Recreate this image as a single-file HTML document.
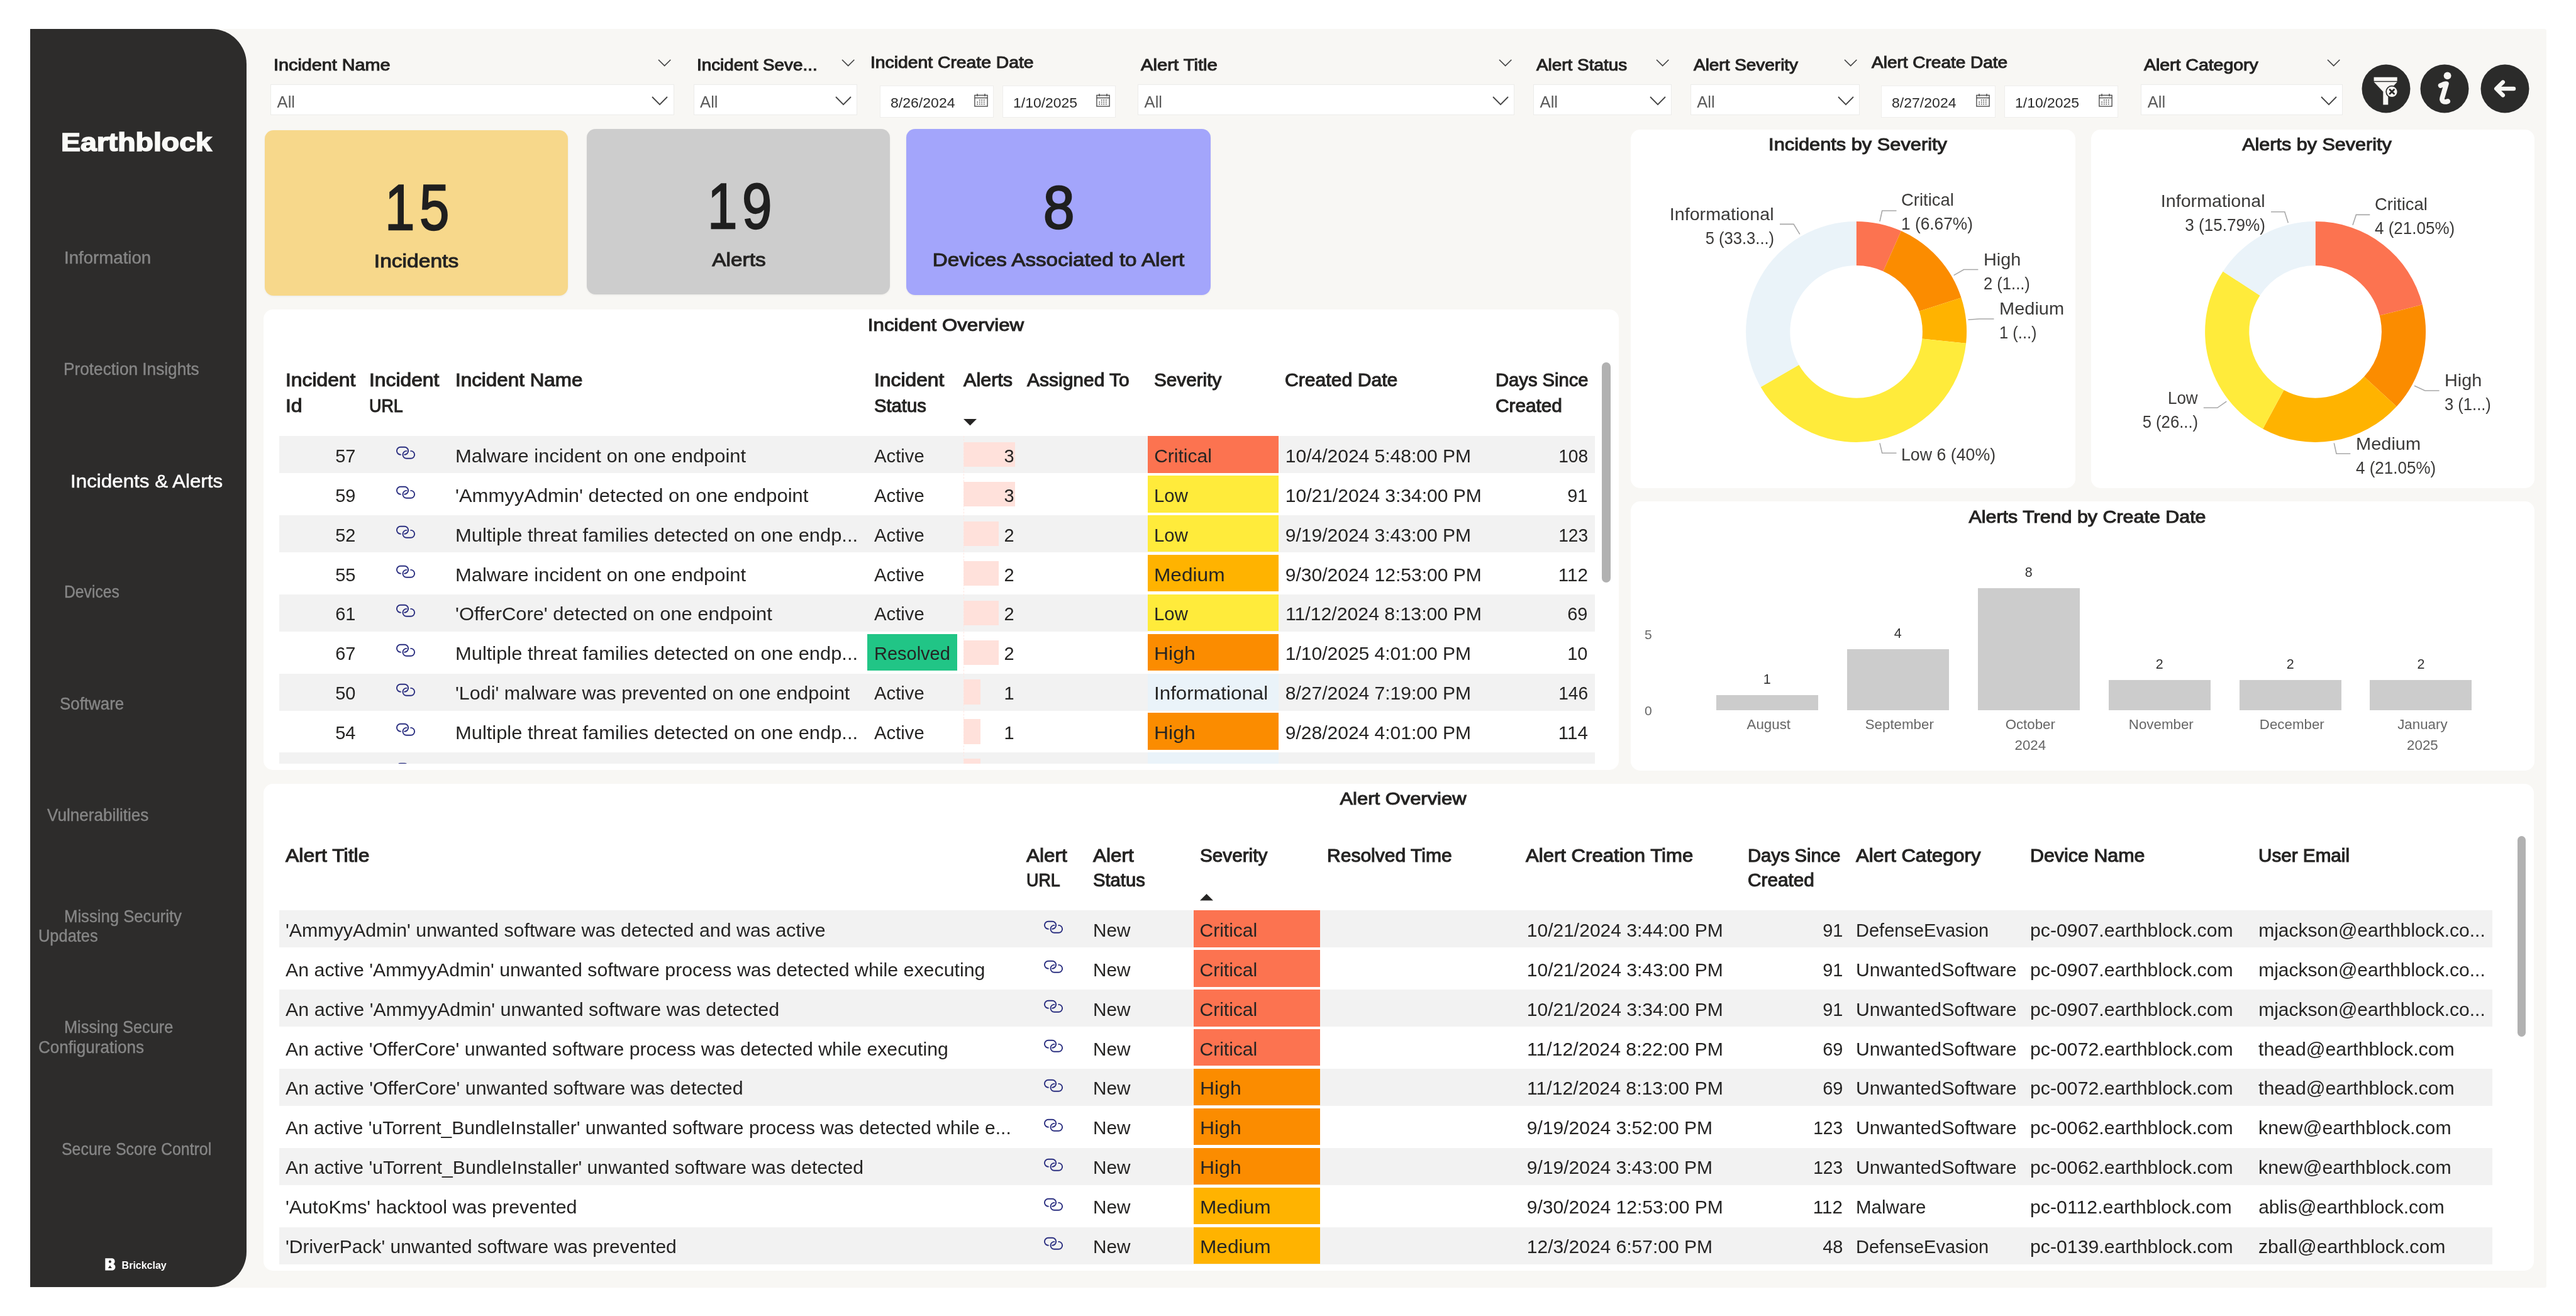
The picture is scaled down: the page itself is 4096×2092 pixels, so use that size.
<!DOCTYPE html><html><head><meta charset="utf-8"><title>Incidents &amp; Alerts</title><style>
html,body{margin:0;padding:0;background:#fff;}
#pg{will-change:transform;position:relative;width:4096px;height:2092px;overflow:hidden;background:#fff;font-family:"Liberation Sans",sans-serif;color:#252423;}
.t{position:absolute;white-space:pre;}
.b{position:absolute;}
.bb{font-weight:bold;}
.h{font-weight:normal;-webkit-text-stroke:1.05px #252423;}
svg{position:absolute;overflow:visible;}
</style></head><body><div id="pg">
<div class="b" style="left:48.0px;top:46.0px;width:4001.2px;height:2001.3px;background:#f8f7f4;border-radius:0 3px 3px 0;"></div>
<div class="b" style="left:48.0px;top:46.0px;width:344.2px;height:1999.5px;background:#2d2c2b;border-radius:0 56px 56px 0;"></div>
<div class="t bb" style="top:206.1px;font-size:40px;line-height:40px;left:97.0px;color:#fafaf7;transform-origin:0 50%;transform:scaleX(1.16);-webkit-text-stroke:1.6px #fafaf7;">Earthblock</div>
<div class="t" style="top:396.5px;font-size:27px;line-height:27px;left:102.2px;color:#868686;transform:scaleX(1.023);transform-origin:0 50%;-webkit-text-stroke:0.4px #868686;">Information</div>
<div class="t" style="top:574.1px;font-size:27px;line-height:27px;left:100.8px;color:#868686;transform:scaleX(0.971);transform-origin:0 50%;-webkit-text-stroke:0.4px #868686;">Protection Insights</div>
<div class="t" style="top:749.6px;font-size:29.6px;line-height:29.6px;left:111.6px;color:#ffffff;transform:scaleX(1.059);transform-origin:0 50%;-webkit-text-stroke:0.5px #fff;">Incidents &amp; Alerts</div>
<div class="t" style="top:927.8px;font-size:27px;line-height:27px;left:102.2px;color:#868686;transform:scaleX(0.916);transform-origin:0 50%;-webkit-text-stroke:0.4px #868686;">Devices</div>
<div class="t" style="top:1105.5px;font-size:27px;line-height:27px;left:95.1px;color:#868686;transform:scaleX(0.959);transform-origin:0 50%;-webkit-text-stroke:0.4px #868686;">Software</div>
<div class="t" style="top:1282.6px;font-size:27px;line-height:27px;left:74.9px;color:#868686;transform:scaleX(0.966);transform-origin:0 50%;-webkit-text-stroke:0.4px #868686;">Vulnerabilities</div>
<div class="t" style="top:1443.7px;font-size:27px;line-height:27px;left:102.2px;color:#868686;transform:scaleX(0.951);transform-origin:0 50%;-webkit-text-stroke:0.4px #868686;">Missing Security</div>
<div class="t" style="top:1475.2px;font-size:27px;line-height:27px;left:61.2px;color:#868686;transform:scaleX(0.942);transform-origin:0 50%;-webkit-text-stroke:0.4px #868686;">Updates</div>
<div class="t" style="top:1620.4px;font-size:27px;line-height:27px;left:102.2px;color:#868686;transform:scaleX(0.939);transform-origin:0 50%;-webkit-text-stroke:0.4px #868686;">Missing Secure</div>
<div class="t" style="top:1651.9px;font-size:27px;line-height:27px;left:61.2px;color:#868686;transform:scaleX(0.965);transform-origin:0 50%;-webkit-text-stroke:0.4px #868686;">Configurations</div>
<div class="t" style="top:1814.3px;font-size:27px;line-height:27px;left:97.5px;color:#868686;transform:scaleX(0.923);transform-origin:0 50%;-webkit-text-stroke:0.4px #868686;">Secure Score Control</div>
<svg style="left:166.5px;top:1999.5px" width="17" height="20" viewBox="0 0 17 20"><path fill="#fff" fill-rule="evenodd" d="M0.3,0.3 H10.5 C14,0.3 15.6,2.6 15.6,5.2 C15.6,7.2 14.7,8.6 13.3,9.4 C15.3,10.2 16.4,11.9 16.4,14 C16.4,17.4 14,19.6 10.5,19.6 H0.3 Z M7.9,3.6 A2.1,2.1 0 1 0 7.9,7.8 A2.1,2.1 0 1 0 7.9,3.6 Z M7.9,11.6 L4.9,16 H10.9 Z"/></svg>
<div class="t bb" style="top:2003.5px;font-size:16px;line-height:16px;left:193.6px;color:#ffffff;">Brickclay</div>
<div class="t h" style="top:89.8px;font-size:26.3px;line-height:26.3px;left:435.0px;transform:scaleX(1.094);transform-origin:0 50%;">Incident Name</div>
<svg style="left:1047.2px;top:94.6px" width="19.3" height="9.6"><polyline points="0,0 9.65,9.6 19.3,0" fill="none" stroke="#444" stroke-width="1.7"/></svg>
<div class="b" style="left:430.0px;top:134.2px;width:641.5px;height:49.2px;background:#fff;box-sizing:border-box;border:1.5px solid #ececea;"></div>
<div class="t" style="top:149.9px;font-size:25.6px;line-height:25.6px;left:440.6px;color:#5a5a5a;">All</div>
<svg style="left:1037.1px;top:154.3px" width="24" height="12.2"><polyline points="0,0 12.0,12.2 24,0" fill="none" stroke="#444" stroke-width="1.8"/></svg>
<div class="t h" style="top:89.8px;font-size:26.3px;line-height:26.3px;left:1107.5px;transform:scaleX(1.057);transform-origin:0 50%;">Incident Seve...</div>
<svg style="left:1338.7px;top:94.6px" width="19.3" height="9.6"><polyline points="0,0 9.65,9.6 19.3,0" fill="none" stroke="#444" stroke-width="1.7"/></svg>
<div class="b" style="left:1102.5px;top:134.2px;width:260.5px;height:49.2px;background:#fff;box-sizing:border-box;border:1.5px solid #ececea;"></div>
<div class="t" style="top:149.9px;font-size:25.6px;line-height:25.6px;left:1113.1px;color:#5a5a5a;">All</div>
<svg style="left:1328.6px;top:154.3px" width="24" height="12.2"><polyline points="0,0 12.0,12.2 24,0" fill="none" stroke="#444" stroke-width="1.8"/></svg>
<div class="t h" style="top:85.7px;font-size:26.3px;line-height:26.3px;left:1383.8px;transform:scaleX(1.076);transform-origin:0 50%;">Incident Create Date</div>
<div class="b" style="left:1399.4px;top:136.3px;width:180.9px;height:50.7px;background:#fff;box-sizing:border-box;border:1.5px solid #efeeec;"></div>
<div class="t" style="top:152.7px;font-size:22px;line-height:22px;left:1416.3px;color:#2a2a2a;transform:scaleX(1.048);transform-origin:0 50%;">8/26/2024</div>
<svg style="left:1548.8px;top:149.4px" width="22" height="21" viewBox="0 0 22 21"><g fill="none" stroke="#484848" stroke-width="1.35"><rect x="0.9" y="2.4" width="20.2" height="17.6"/><line x1="0.9" y1="6.6" x2="21.1" y2="6.6"/><line x1="5" y1="0" x2="5" y2="4.2"/><line x1="17" y1="0" x2="17" y2="4.2"/></g><g fill="#484848"><rect x="7.9" y="9.3" width="1.6" height="1.6"/><rect x="11.4" y="9.3" width="1.6" height="1.6"/><rect x="14.9" y="9.3" width="1.6" height="1.6"/><rect x="4.4" y="12.5" width="1.6" height="1.6"/><rect x="7.9" y="12.5" width="1.6" height="1.6"/><rect x="11.4" y="12.5" width="1.6" height="1.6"/><rect x="14.9" y="12.5" width="1.6" height="1.6"/><rect x="4.4" y="15.7" width="1.6" height="1.6"/><rect x="7.9" y="15.7" width="1.6" height="1.6"/><rect x="11.4" y="15.7" width="1.6" height="1.6"/><rect x="14.9" y="15.7" width="1.6" height="1.6"/></g></svg>
<div class="b" style="left:1594.2px;top:136.3px;width:180.1px;height:50.7px;background:#fff;box-sizing:border-box;border:1.5px solid #efeeec;"></div>
<div class="t" style="top:152.7px;font-size:22px;line-height:22px;left:1611.1px;color:#2a2a2a;transform:scaleX(1.043);transform-origin:0 50%;">1/10/2025</div>
<svg style="left:1742.8px;top:149.4px" width="22" height="21" viewBox="0 0 22 21"><g fill="none" stroke="#484848" stroke-width="1.35"><rect x="0.9" y="2.4" width="20.2" height="17.6"/><line x1="0.9" y1="6.6" x2="21.1" y2="6.6"/><line x1="5" y1="0" x2="5" y2="4.2"/><line x1="17" y1="0" x2="17" y2="4.2"/></g><g fill="#484848"><rect x="7.9" y="9.3" width="1.6" height="1.6"/><rect x="11.4" y="9.3" width="1.6" height="1.6"/><rect x="14.9" y="9.3" width="1.6" height="1.6"/><rect x="4.4" y="12.5" width="1.6" height="1.6"/><rect x="7.9" y="12.5" width="1.6" height="1.6"/><rect x="11.4" y="12.5" width="1.6" height="1.6"/><rect x="14.9" y="12.5" width="1.6" height="1.6"/><rect x="4.4" y="15.7" width="1.6" height="1.6"/><rect x="7.9" y="15.7" width="1.6" height="1.6"/><rect x="11.4" y="15.7" width="1.6" height="1.6"/><rect x="14.9" y="15.7" width="1.6" height="1.6"/></g></svg>
<div class="t h" style="top:89.8px;font-size:26.3px;line-height:26.3px;left:1814.0px;transform:scaleX(1.111);transform-origin:0 50%;">Alert Title</div>
<svg style="left:2384.1px;top:94.6px" width="19.3" height="9.6"><polyline points="0,0 9.65,9.6 19.3,0" fill="none" stroke="#444" stroke-width="1.7"/></svg>
<div class="b" style="left:1809.0px;top:134.2px;width:599.4px;height:49.2px;background:#fff;box-sizing:border-box;border:1.5px solid #ececea;"></div>
<div class="t" style="top:149.9px;font-size:25.6px;line-height:25.6px;left:1819.6px;color:#5a5a5a;">All</div>
<svg style="left:2374.0px;top:154.3px" width="24" height="12.2"><polyline points="0,0 12.0,12.2 24,0" fill="none" stroke="#444" stroke-width="1.8"/></svg>
<div class="t h" style="top:89.8px;font-size:26.3px;line-height:26.3px;left:2443.0px;transform:scaleX(1.060);transform-origin:0 50%;">Alert Status</div>
<svg style="left:2633.9px;top:94.6px" width="19.3" height="9.6"><polyline points="0,0 9.65,9.6 19.3,0" fill="none" stroke="#444" stroke-width="1.7"/></svg>
<div class="b" style="left:2438.0px;top:134.2px;width:220.2px;height:49.2px;background:#fff;box-sizing:border-box;border:1.5px solid #ececea;"></div>
<div class="t" style="top:149.9px;font-size:25.6px;line-height:25.6px;left:2448.6px;color:#5a5a5a;">All</div>
<svg style="left:2623.8px;top:154.3px" width="24" height="12.2"><polyline points="0,0 12.0,12.2 24,0" fill="none" stroke="#444" stroke-width="1.8"/></svg>
<div class="t h" style="top:89.8px;font-size:26.3px;line-height:26.3px;left:2692.6px;transform:scaleX(1.062);transform-origin:0 50%;">Alert Severity</div>
<svg style="left:2933.2px;top:94.6px" width="19.3" height="9.6"><polyline points="0,0 9.65,9.6 19.3,0" fill="none" stroke="#444" stroke-width="1.7"/></svg>
<div class="b" style="left:2687.6px;top:134.2px;width:269.9px;height:49.2px;background:#fff;box-sizing:border-box;border:1.5px solid #ececea;"></div>
<div class="t" style="top:149.9px;font-size:25.6px;line-height:25.6px;left:2698.2px;color:#5a5a5a;">All</div>
<svg style="left:2923.1px;top:154.3px" width="24" height="12.2"><polyline points="0,0 12.0,12.2 24,0" fill="none" stroke="#444" stroke-width="1.8"/></svg>
<div class="t h" style="top:85.7px;font-size:26.3px;line-height:26.3px;left:2975.8px;transform:scaleX(1.064);transform-origin:0 50%;">Alert Create Date</div>
<div class="b" style="left:2991.4px;top:136.3px;width:181.9px;height:50.7px;background:#fff;box-sizing:border-box;border:1.5px solid #efeeec;"></div>
<div class="t" style="top:152.7px;font-size:22px;line-height:22px;left:3008.3px;color:#2a2a2a;transform:scaleX(1.048);transform-origin:0 50%;">8/27/2024</div>
<svg style="left:3141.8px;top:149.4px" width="22" height="21" viewBox="0 0 22 21"><g fill="none" stroke="#484848" stroke-width="1.35"><rect x="0.9" y="2.4" width="20.2" height="17.6"/><line x1="0.9" y1="6.6" x2="21.1" y2="6.6"/><line x1="5" y1="0" x2="5" y2="4.2"/><line x1="17" y1="0" x2="17" y2="4.2"/></g><g fill="#484848"><rect x="7.9" y="9.3" width="1.6" height="1.6"/><rect x="11.4" y="9.3" width="1.6" height="1.6"/><rect x="14.9" y="9.3" width="1.6" height="1.6"/><rect x="4.4" y="12.5" width="1.6" height="1.6"/><rect x="7.9" y="12.5" width="1.6" height="1.6"/><rect x="11.4" y="12.5" width="1.6" height="1.6"/><rect x="14.9" y="12.5" width="1.6" height="1.6"/><rect x="4.4" y="15.7" width="1.6" height="1.6"/><rect x="7.9" y="15.7" width="1.6" height="1.6"/><rect x="11.4" y="15.7" width="1.6" height="1.6"/><rect x="14.9" y="15.7" width="1.6" height="1.6"/></g></svg>
<div class="b" style="left:3186.9px;top:136.3px;width:181.1px;height:50.7px;background:#fff;box-sizing:border-box;border:1.5px solid #efeeec;"></div>
<div class="t" style="top:152.7px;font-size:22px;line-height:22px;left:3203.8px;color:#2a2a2a;transform:scaleX(1.043);transform-origin:0 50%;">1/10/2025</div>
<svg style="left:3336.5px;top:149.4px" width="22" height="21" viewBox="0 0 22 21"><g fill="none" stroke="#484848" stroke-width="1.35"><rect x="0.9" y="2.4" width="20.2" height="17.6"/><line x1="0.9" y1="6.6" x2="21.1" y2="6.6"/><line x1="5" y1="0" x2="5" y2="4.2"/><line x1="17" y1="0" x2="17" y2="4.2"/></g><g fill="#484848"><rect x="7.9" y="9.3" width="1.6" height="1.6"/><rect x="11.4" y="9.3" width="1.6" height="1.6"/><rect x="14.9" y="9.3" width="1.6" height="1.6"/><rect x="4.4" y="12.5" width="1.6" height="1.6"/><rect x="7.9" y="12.5" width="1.6" height="1.6"/><rect x="11.4" y="12.5" width="1.6" height="1.6"/><rect x="14.9" y="12.5" width="1.6" height="1.6"/><rect x="4.4" y="15.7" width="1.6" height="1.6"/><rect x="7.9" y="15.7" width="1.6" height="1.6"/><rect x="11.4" y="15.7" width="1.6" height="1.6"/><rect x="14.9" y="15.7" width="1.6" height="1.6"/></g></svg>
<div class="t h" style="top:89.8px;font-size:26.3px;line-height:26.3px;left:3409.2px;transform:scaleX(1.081);transform-origin:0 50%;">Alert Category</div>
<svg style="left:3700.9px;top:94.6px" width="19.3" height="9.6"><polyline points="0,0 9.65,9.6 19.3,0" fill="none" stroke="#444" stroke-width="1.7"/></svg>
<div class="b" style="left:3404.2px;top:134.2px;width:321.0px;height:49.2px;background:#fff;box-sizing:border-box;border:1.5px solid #ececea;"></div>
<div class="t" style="top:149.9px;font-size:25.6px;line-height:25.6px;left:3414.8px;color:#5a5a5a;">All</div>
<svg style="left:3690.8px;top:154.3px" width="24" height="12.2"><polyline points="0,0 12.0,12.2 24,0" fill="none" stroke="#444" stroke-width="1.8"/></svg>
<svg style="left:3754.6px;top:102.3px" width="78" height="78" viewBox="-39 -39 78 78"><circle r="38.5" fill="#2b2b2a"/><rect x="-19.4" y="-18.3" width="37.1" height="6.1" fill="#f8f7f4"/><path d="M-19.4,-10.8 H17.7 L3.3,4.7 V25.6 H-4.7 V4.7 Z" fill="#f8f7f4"/><circle cx="9.3" cy="4.8" r="10" fill="#2b2b2a"/><circle cx="9.3" cy="4.8" r="8.3" fill="#f8f7f4"/><path d="M6,1.5 L12.6,8.1 M12.6,1.5 L6,8.1" stroke="#2b2b2a" stroke-width="2.8" stroke-linecap="round"/></svg>
<svg style="left:3847.5px;top:102.3px" width="78" height="78" viewBox="-39 -39 78 78"><circle r="38.5" fill="#2b2b2a"/><circle cx="4.6" cy="-20.7" r="5.9" fill="#f8f7f4"/><path d="M-6.3,-5 C-2.5,-7 1,-8.5 2.9,-7.8 L-3.7,14.5 C-5,20 -1,22.4 5.2,20" fill="none" stroke="#f8f7f4" stroke-width="7.8" stroke-linecap="round" stroke-linejoin="round"/></svg>
<svg style="left:3943.5px;top:102.3px" width="78" height="78" viewBox="-39 -39 78 78"><circle r="38.5" fill="#2b2b2a"/><path d="M14,0 H-13.4 M-3.2,-10.4 L-13.8,0 L-3.2,10.4" fill="none" stroke="#f8f7f4" stroke-width="6.4" stroke-linecap="round" stroke-linejoin="round"/></svg>
<div class="b" style="left:420.7px;top:206.7px;width:482.1px;height:263.5px;background:#f7d88b;border-radius:14px;box-shadow:0 1px 3px rgba(0,0,0,0.06);"></div>
<div class="t" style="top:279.5px;font-size:101.5px;line-height:101.5px;left:-333.2px;width:2000px;text-align:center;color:#1f1f1f;transform:scaleX(0.84);letter-spacing:9px;-webkit-text-stroke:2.4px #1f1f1f;">15</div>
<div class="t h" style="top:400.4px;font-size:30.3px;line-height:30.3px;left:-338.2px;width:2000px;text-align:center;transform:scaleX(1.108);transform-origin:50% 50%;">Incidents</div>
<div class="b" style="left:933.4px;top:205.0px;width:482.1px;height:263.2px;background:#cdcdcd;border-radius:14px;box-shadow:0 1px 3px rgba(0,0,0,0.06);"></div>
<div class="t" style="top:278.3px;font-size:101.5px;line-height:101.5px;left:179.5px;width:2000px;text-align:center;color:#1f1f1f;transform:scaleX(0.84);letter-spacing:9px;-webkit-text-stroke:2.4px #1f1f1f;">19</div>
<div class="t h" style="top:398.4px;font-size:30.3px;line-height:30.3px;left:174.5px;width:2000px;text-align:center;transform:scaleX(1.102);transform-origin:50% 50%;">Alerts</div>
<div class="b" style="left:1440.5px;top:205.4px;width:484.5px;height:264.1px;background:#a3a5fb;border-radius:14px;box-shadow:0 1px 3px rgba(0,0,0,0.06);"></div>
<div class="t" style="top:281.7px;font-size:96.5px;line-height:96.5px;left:687.8px;width:2000px;text-align:center;color:#1f1f1f;transform:scaleX(0.93);letter-spacing:9px;-webkit-text-stroke:2.4px #1f1f1f;">8</div>
<div class="t h" style="top:398.2px;font-size:30.3px;line-height:30.3px;left:682.8px;width:2000px;text-align:center;transform:scaleX(1.096);transform-origin:50% 50%;">Devices Associated to Alert</div>
<div class="b" style="left:418.6px;top:492.3px;width:2155.1px;height:732.1px;background:#fff;border-radius:15px;"></div>
<div class="t h" style="top:501.5px;font-size:28.3px;line-height:28.3px;left:503.5px;width:2000px;text-align:center;transform:scaleX(1.104);transform-origin:50% 50%;">Incident Overview</div>
<div class="t h" style="top:590.4px;font-size:28.8px;line-height:28.8px;left:454.0px;transform:scaleX(1.104);transform-origin:0 50%;">Incident</div>
<div class="t h" style="top:630.6px;font-size:28.8px;line-height:28.8px;left:454.0px;transform:scaleX(1.107);transform-origin:0 50%;">Id</div>
<div class="t h" style="top:590.4px;font-size:28.8px;line-height:28.8px;left:587.0px;transform:scaleX(1.104);transform-origin:0 50%;">Incident</div>
<div class="t h" style="top:630.6px;font-size:28.8px;line-height:28.8px;left:587.0px;transform:scaleX(0.934);transform-origin:0 50%;">URL</div>
<div class="t h" style="top:590.4px;font-size:28.8px;line-height:28.8px;left:723.7px;transform:scaleX(1.090);transform-origin:0 50%;">Incident Name</div>
<div class="t h" style="top:590.4px;font-size:28.8px;line-height:28.8px;left:1390.3px;transform:scaleX(1.104);transform-origin:0 50%;">Incident</div>
<div class="t h" style="top:630.6px;font-size:28.8px;line-height:28.8px;left:1390.3px;transform:scaleX(1.014);transform-origin:0 50%;">Status</div>
<div class="t h" style="top:590.4px;font-size:28.8px;line-height:28.8px;left:1532.4px;transform:scaleX(1.061);transform-origin:0 50%;">Alerts</div>
<div class="t h" style="top:590.4px;font-size:28.8px;line-height:28.8px;left:1632.9px;transform:scaleX(1.041);transform-origin:0 50%;">Assigned To</div>
<div class="t h" style="top:590.4px;font-size:28.8px;line-height:28.8px;left:1835.2px;transform:scaleX(1.031);transform-origin:0 50%;">Severity</div>
<div class="t h" style="top:590.4px;font-size:28.8px;line-height:28.8px;left:2042.9px;transform:scaleX(1.047);transform-origin:0 50%;">Created Date</div>
<div class="t h" style="top:590.4px;font-size:28.8px;line-height:28.8px;left:2377.7px;transform:scaleX(1.013);transform-origin:0 50%;">Days Since</div>
<div class="t h" style="top:630.6px;font-size:28.8px;line-height:28.8px;left:2377.7px;transform:scaleX(1.033);transform-origin:0 50%;">Created</div>
<svg style="left:1532.4px;top:666px" width="21" height="11"><polygon points="0,0 21,0 10.5,10.5" fill="#252423"/></svg>
<div class="b" style="left:0;top:0;width:4096px;height:1214.4px;overflow:hidden;">
<div class="b" style="left:444.0px;top:693.1px;width:2092.3px;height:59.4px;background:#f2f2f2;"></div>
<div class="b" style="left:1532.4px;top:703.0px;width:81.8px;height:39.4px;background:#ffe1db;"></div>
<div class="b" style="left:1825.0px;top:693.1px;width:207.7px;height:58.6px;background:#fc7350;"></div>
<svg style="left:629.0px;top:708.8px" width="32" height="22" viewBox="0 0 32 22"><g fill="none" stroke="#2b2f80" stroke-width="1.9" stroke-linecap="round"><path d="M7.9,13.7 A5.95,5.95 0 0 1 7.9,1.8 L14.2,1.8 A5.95,5.95 0 0 1 14.2,13.7"/><path d="M17.4,7.9 A5.95,5.95 0 0 0 17.4,19.8 L24.2,19.8 A5.95,5.95 0 0 0 24.2,7.9"/></g></svg>
<div class="t" style="top:709.8px;font-size:30px;line-height:30px;right:3530.3px;transform:scaleX(0.965);transform-origin:100% 50%;">57</div>
<div class="t" style="top:709.8px;font-size:30px;line-height:30px;left:723.7px;transform:scaleX(1.030);transform-origin:0 50%;">Malware incident on one endpoint</div>
<div class="t" style="top:709.8px;font-size:30px;line-height:30px;left:1390.3px;transform:scaleX(0.976);transform-origin:0 50%;">Active</div>
<div class="t" style="top:709.8px;font-size:30px;line-height:30px;right:2483.5px;transform:scaleX(0.965);transform-origin:100% 50%;">3</div>
<div class="t" style="top:709.8px;font-size:30px;line-height:30px;left:1835.2px;">Critical</div>
<div class="t" style="top:709.8px;font-size:30px;line-height:30px;left:2043.8px;">10/4/2024 5:48:00 PM</div>
<div class="t" style="top:709.8px;font-size:30px;line-height:30px;right:1571.3px;transform:scaleX(0.937);transform-origin:100% 50%;">108</div>
<div class="b" style="left:1532.4px;top:765.9px;width:81.8px;height:39.4px;background:#ffe1db;"></div>
<div class="b" style="left:1825.0px;top:756.0px;width:207.7px;height:58.6px;background:#ffeb3b;"></div>
<svg style="left:629.0px;top:771.7px" width="32" height="22" viewBox="0 0 32 22"><g fill="none" stroke="#2b2f80" stroke-width="1.9" stroke-linecap="round"><path d="M7.9,13.7 A5.95,5.95 0 0 1 7.9,1.8 L14.2,1.8 A5.95,5.95 0 0 1 14.2,13.7"/><path d="M17.4,7.9 A5.95,5.95 0 0 0 17.4,19.8 L24.2,19.8 A5.95,5.95 0 0 0 24.2,7.9"/></g></svg>
<div class="t" style="top:772.7px;font-size:30px;line-height:30px;right:3530.3px;transform:scaleX(0.965);transform-origin:100% 50%;">59</div>
<div class="t" style="top:772.7px;font-size:30px;line-height:30px;left:723.7px;transform:scaleX(1.033);transform-origin:0 50%;">'AmmyyAdmin' detected on one endpoint</div>
<div class="t" style="top:772.7px;font-size:30px;line-height:30px;left:1390.3px;transform:scaleX(0.976);transform-origin:0 50%;">Active</div>
<div class="t" style="top:772.7px;font-size:30px;line-height:30px;right:2483.5px;transform:scaleX(0.965);transform-origin:100% 50%;">3</div>
<div class="t" style="top:772.7px;font-size:30px;line-height:30px;left:1835.2px;transform:scaleX(0.978);transform-origin:0 50%;">Low</div>
<div class="t" style="top:772.7px;font-size:30px;line-height:30px;left:2043.8px;">10/21/2024 3:34:00 PM</div>
<div class="t" style="top:772.7px;font-size:30px;line-height:30px;right:1571.3px;transform:scaleX(0.965);transform-origin:100% 50%;">91</div>
<div class="b" style="left:444.0px;top:818.9px;width:2092.3px;height:59.4px;background:#f2f2f2;"></div>
<div class="b" style="left:1532.4px;top:828.8px;width:56.1px;height:39.4px;background:#ffe1db;"></div>
<div class="b" style="left:1825.0px;top:818.9px;width:207.7px;height:58.6px;background:#ffeb3b;"></div>
<svg style="left:629.0px;top:834.6px" width="32" height="22" viewBox="0 0 32 22"><g fill="none" stroke="#2b2f80" stroke-width="1.9" stroke-linecap="round"><path d="M7.9,13.7 A5.95,5.95 0 0 1 7.9,1.8 L14.2,1.8 A5.95,5.95 0 0 1 14.2,13.7"/><path d="M17.4,7.9 A5.95,5.95 0 0 0 17.4,19.8 L24.2,19.8 A5.95,5.95 0 0 0 24.2,7.9"/></g></svg>
<div class="t" style="top:835.6px;font-size:30px;line-height:30px;right:3530.3px;transform:scaleX(0.965);transform-origin:100% 50%;">52</div>
<div class="t" style="top:835.6px;font-size:30px;line-height:30px;left:723.7px;transform:scaleX(1.029);transform-origin:0 50%;">Multiple threat families detected on one endp...</div>
<div class="t" style="top:835.6px;font-size:30px;line-height:30px;left:1390.3px;transform:scaleX(0.976);transform-origin:0 50%;">Active</div>
<div class="t" style="top:835.6px;font-size:30px;line-height:30px;right:2483.5px;transform:scaleX(0.965);transform-origin:100% 50%;">2</div>
<div class="t" style="top:835.6px;font-size:30px;line-height:30px;left:1835.2px;transform:scaleX(0.978);transform-origin:0 50%;">Low</div>
<div class="t" style="top:835.6px;font-size:30px;line-height:30px;left:2043.8px;">9/19/2024 3:43:00 PM</div>
<div class="t" style="top:835.6px;font-size:30px;line-height:30px;right:1571.3px;transform:scaleX(0.937);transform-origin:100% 50%;">123</div>
<div class="b" style="left:1532.4px;top:891.7px;width:56.1px;height:39.4px;background:#ffe1db;"></div>
<div class="b" style="left:1825.0px;top:881.8px;width:207.7px;height:58.6px;background:#ffb300;"></div>
<svg style="left:629.0px;top:897.5px" width="32" height="22" viewBox="0 0 32 22"><g fill="none" stroke="#2b2f80" stroke-width="1.9" stroke-linecap="round"><path d="M7.9,13.7 A5.95,5.95 0 0 1 7.9,1.8 L14.2,1.8 A5.95,5.95 0 0 1 14.2,13.7"/><path d="M17.4,7.9 A5.95,5.95 0 0 0 17.4,19.8 L24.2,19.8 A5.95,5.95 0 0 0 24.2,7.9"/></g></svg>
<div class="t" style="top:898.5px;font-size:30px;line-height:30px;right:3530.3px;transform:scaleX(0.965);transform-origin:100% 50%;">55</div>
<div class="t" style="top:898.5px;font-size:30px;line-height:30px;left:723.7px;transform:scaleX(1.030);transform-origin:0 50%;">Malware incident on one endpoint</div>
<div class="t" style="top:898.5px;font-size:30px;line-height:30px;left:1390.3px;transform:scaleX(0.976);transform-origin:0 50%;">Active</div>
<div class="t" style="top:898.5px;font-size:30px;line-height:30px;right:2483.5px;transform:scaleX(0.965);transform-origin:100% 50%;">2</div>
<div class="t" style="top:898.5px;font-size:30px;line-height:30px;left:1835.2px;transform:scaleX(1.055);transform-origin:0 50%;">Medium</div>
<div class="t" style="top:898.5px;font-size:30px;line-height:30px;left:2043.8px;">9/30/2024 12:53:00 PM</div>
<div class="t" style="top:898.5px;font-size:30px;line-height:30px;right:1571.3px;transform:scaleX(0.984);transform-origin:100% 50%;">112</div>
<div class="b" style="left:444.0px;top:944.7px;width:2092.3px;height:59.4px;background:#f2f2f2;"></div>
<div class="b" style="left:1532.4px;top:954.6px;width:56.1px;height:39.4px;background:#ffe1db;"></div>
<div class="b" style="left:1825.0px;top:944.7px;width:207.7px;height:58.6px;background:#ffeb3b;"></div>
<svg style="left:629.0px;top:960.4px" width="32" height="22" viewBox="0 0 32 22"><g fill="none" stroke="#2b2f80" stroke-width="1.9" stroke-linecap="round"><path d="M7.9,13.7 A5.95,5.95 0 0 1 7.9,1.8 L14.2,1.8 A5.95,5.95 0 0 1 14.2,13.7"/><path d="M17.4,7.9 A5.95,5.95 0 0 0 17.4,19.8 L24.2,19.8 A5.95,5.95 0 0 0 24.2,7.9"/></g></svg>
<div class="t" style="top:961.4px;font-size:30px;line-height:30px;right:3530.3px;transform:scaleX(0.965);transform-origin:100% 50%;">61</div>
<div class="t" style="top:961.4px;font-size:30px;line-height:30px;left:723.7px;transform:scaleX(1.029);transform-origin:0 50%;">'OfferCore' detected on one endpoint</div>
<div class="t" style="top:961.4px;font-size:30px;line-height:30px;left:1390.3px;transform:scaleX(0.976);transform-origin:0 50%;">Active</div>
<div class="t" style="top:961.4px;font-size:30px;line-height:30px;right:2483.5px;transform:scaleX(0.965);transform-origin:100% 50%;">2</div>
<div class="t" style="top:961.4px;font-size:30px;line-height:30px;left:1835.2px;transform:scaleX(0.978);transform-origin:0 50%;">Low</div>
<div class="t" style="top:961.4px;font-size:30px;line-height:30px;left:2043.8px;transform:scaleX(1.007);transform-origin:0 50%;">11/12/2024 8:13:00 PM</div>
<div class="t" style="top:961.4px;font-size:30px;line-height:30px;right:1571.3px;transform:scaleX(0.965);transform-origin:100% 50%;">69</div>
<div class="b" style="left:1379.0px;top:1007.6px;width:142.8px;height:58.9px;background:#21c586;"></div>
<div class="b" style="left:1532.4px;top:1017.5px;width:56.1px;height:39.4px;background:#ffe1db;"></div>
<div class="b" style="left:1825.0px;top:1007.6px;width:207.7px;height:58.6px;background:#fb8c00;"></div>
<svg style="left:629.0px;top:1023.3px" width="32" height="22" viewBox="0 0 32 22"><g fill="none" stroke="#2b2f80" stroke-width="1.9" stroke-linecap="round"><path d="M7.9,13.7 A5.95,5.95 0 0 1 7.9,1.8 L14.2,1.8 A5.95,5.95 0 0 1 14.2,13.7"/><path d="M17.4,7.9 A5.95,5.95 0 0 0 17.4,19.8 L24.2,19.8 A5.95,5.95 0 0 0 24.2,7.9"/></g></svg>
<div class="t" style="top:1024.3px;font-size:30px;line-height:30px;right:3530.3px;transform:scaleX(0.965);transform-origin:100% 50%;">67</div>
<div class="t" style="top:1024.3px;font-size:30px;line-height:30px;left:723.7px;transform:scaleX(1.029);transform-origin:0 50%;">Multiple threat families detected on one endp...</div>
<div class="t" style="top:1024.3px;font-size:30px;line-height:30px;left:1390.3px;transform:scaleX(0.966);transform-origin:0 50%;">Resolved</div>
<div class="t" style="top:1024.3px;font-size:30px;line-height:30px;right:2483.5px;transform:scaleX(0.965);transform-origin:100% 50%;">2</div>
<div class="t" style="top:1024.3px;font-size:30px;line-height:30px;left:1835.2px;transform:scaleX(1.065);transform-origin:0 50%;">High</div>
<div class="t" style="top:1024.3px;font-size:30px;line-height:30px;left:2043.8px;">1/10/2025 4:01:00 PM</div>
<div class="t" style="top:1024.3px;font-size:30px;line-height:30px;right:1571.3px;transform:scaleX(0.965);transform-origin:100% 50%;">10</div>
<div class="b" style="left:444.0px;top:1070.5px;width:2092.3px;height:59.4px;background:#f2f2f2;"></div>
<div class="b" style="left:1532.4px;top:1080.4px;width:27.0px;height:39.4px;background:#ffe1db;"></div>
<div class="b" style="left:1825.0px;top:1070.5px;width:207.7px;height:58.6px;background:#eaf3f9;"></div>
<svg style="left:629.0px;top:1086.2px" width="32" height="22" viewBox="0 0 32 22"><g fill="none" stroke="#2b2f80" stroke-width="1.9" stroke-linecap="round"><path d="M7.9,13.7 A5.95,5.95 0 0 1 7.9,1.8 L14.2,1.8 A5.95,5.95 0 0 1 14.2,13.7"/><path d="M17.4,7.9 A5.95,5.95 0 0 0 17.4,19.8 L24.2,19.8 A5.95,5.95 0 0 0 24.2,7.9"/></g></svg>
<div class="t" style="top:1087.2px;font-size:30px;line-height:30px;right:3530.3px;transform:scaleX(0.965);transform-origin:100% 50%;">50</div>
<div class="t" style="top:1087.2px;font-size:30px;line-height:30px;left:723.7px;transform:scaleX(1.017);transform-origin:0 50%;">'Lodi' malware was prevented on one endpoint</div>
<div class="t" style="top:1087.2px;font-size:30px;line-height:30px;left:1390.3px;transform:scaleX(0.976);transform-origin:0 50%;">Active</div>
<div class="t" style="top:1087.2px;font-size:30px;line-height:30px;right:2483.5px;transform:scaleX(0.965);transform-origin:100% 50%;">1</div>
<div class="t" style="top:1087.2px;font-size:30px;line-height:30px;left:1835.2px;transform:scaleX(1.045);transform-origin:0 50%;">Informational</div>
<div class="t" style="top:1087.2px;font-size:30px;line-height:30px;left:2043.8px;">8/27/2024 7:19:00 PM</div>
<div class="t" style="top:1087.2px;font-size:30px;line-height:30px;right:1571.3px;transform:scaleX(0.937);transform-origin:100% 50%;">146</div>
<div class="b" style="left:1532.4px;top:1143.3px;width:27.0px;height:39.4px;background:#ffe1db;"></div>
<div class="b" style="left:1825.0px;top:1133.4px;width:207.7px;height:58.6px;background:#fb8c00;"></div>
<svg style="left:629.0px;top:1149.1px" width="32" height="22" viewBox="0 0 32 22"><g fill="none" stroke="#2b2f80" stroke-width="1.9" stroke-linecap="round"><path d="M7.9,13.7 A5.95,5.95 0 0 1 7.9,1.8 L14.2,1.8 A5.95,5.95 0 0 1 14.2,13.7"/><path d="M17.4,7.9 A5.95,5.95 0 0 0 17.4,19.8 L24.2,19.8 A5.95,5.95 0 0 0 24.2,7.9"/></g></svg>
<div class="t" style="top:1150.1px;font-size:30px;line-height:30px;right:3530.3px;transform:scaleX(0.965);transform-origin:100% 50%;">54</div>
<div class="t" style="top:1150.1px;font-size:30px;line-height:30px;left:723.7px;transform:scaleX(1.029);transform-origin:0 50%;">Multiple threat families detected on one endp...</div>
<div class="t" style="top:1150.1px;font-size:30px;line-height:30px;left:1390.3px;transform:scaleX(0.976);transform-origin:0 50%;">Active</div>
<div class="t" style="top:1150.1px;font-size:30px;line-height:30px;right:2483.5px;transform:scaleX(0.965);transform-origin:100% 50%;">1</div>
<div class="t" style="top:1150.1px;font-size:30px;line-height:30px;left:1835.2px;transform:scaleX(1.065);transform-origin:0 50%;">High</div>
<div class="t" style="top:1150.1px;font-size:30px;line-height:30px;left:2043.8px;">9/28/2024 4:01:00 PM</div>
<div class="t" style="top:1150.1px;font-size:30px;line-height:30px;right:1571.3px;transform:scaleX(0.984);transform-origin:100% 50%;">114</div>
<div class="b" style="left:444.0px;top:1196.3px;width:2092.3px;height:59.4px;background:#f2f2f2;"></div>
<div class="b" style="left:1532.4px;top:1206.2px;width:27.0px;height:39.4px;background:#ffe1db;"></div>
<div class="b" style="left:1825.0px;top:1196.3px;width:207.7px;height:58.6px;background:#eaf3f9;"></div>
<svg style="left:629.0px;top:1212.0px" width="32" height="22" viewBox="0 0 32 22"><g fill="none" stroke="#2b2f80" stroke-width="1.9" stroke-linecap="round"><path d="M7.9,13.7 A5.95,5.95 0 0 1 7.9,1.8 L14.2,1.8 A5.95,5.95 0 0 1 14.2,13.7"/><path d="M17.4,7.9 A5.95,5.95 0 0 0 17.4,19.8 L24.2,19.8 A5.95,5.95 0 0 0 24.2,7.9"/></g></svg>
<div class="b" style="left:1531.6px;top:693.1px;width:0;height:530px;border-left:1.2px dashed #ffe6e1;"></div>
</div>
<div class="b" style="left:2547.0px;top:575.6px;width:13.6px;height:350.9px;background:#b1b1b1;border-radius:7px;"></div>
<div class="b" style="left:418.6px;top:1246.2px;width:3610.9px;height:773.8px;background:#fff;border-radius:15px;"></div>
<div class="t h" style="top:1255.0px;font-size:28.3px;line-height:28.3px;left:1231.0px;width:2000px;text-align:center;transform:scaleX(1.093);transform-origin:50% 50%;">Alert Overview</div>
<div class="t h" style="top:1345.9px;font-size:28.8px;line-height:28.8px;left:454.0px;transform:scaleX(1.112);transform-origin:0 50%;">Alert Title</div>
<div class="t h" style="top:1345.9px;font-size:28.8px;line-height:28.8px;left:1632.0px;transform:scaleX(1.094);transform-origin:0 50%;">Alert</div>
<div class="t h" style="top:1385.4px;font-size:28.8px;line-height:28.8px;left:1632.0px;transform:scaleX(0.934);transform-origin:0 50%;">URL</div>
<div class="t h" style="top:1345.9px;font-size:28.8px;line-height:28.8px;left:1737.5px;transform:scaleX(1.094);transform-origin:0 50%;">Alert</div>
<div class="t h" style="top:1385.4px;font-size:28.8px;line-height:28.8px;left:1737.5px;transform:scaleX(1.014);transform-origin:0 50%;">Status</div>
<div class="t h" style="top:1345.9px;font-size:28.8px;line-height:28.8px;left:1907.5px;transform:scaleX(1.031);transform-origin:0 50%;">Severity</div>
<div class="t h" style="top:1345.9px;font-size:28.8px;line-height:28.8px;left:2110.0px;transform:scaleX(1.043);transform-origin:0 50%;">Resolved Time</div>
<div class="t h" style="top:1345.9px;font-size:28.8px;line-height:28.8px;left:2426.3px;transform:scaleX(1.080);transform-origin:0 50%;">Alert Creation Time</div>
<div class="t h" style="top:1345.9px;font-size:28.8px;line-height:28.8px;left:2778.7px;transform:scaleX(1.013);transform-origin:0 50%;">Days Since</div>
<div class="t h" style="top:1385.4px;font-size:28.8px;line-height:28.8px;left:2778.7px;transform:scaleX(1.033);transform-origin:0 50%;">Created</div>
<div class="t h" style="top:1345.9px;font-size:28.8px;line-height:28.8px;left:2951.3px;transform:scaleX(1.078);transform-origin:0 50%;">Alert Category</div>
<div class="t h" style="top:1345.9px;font-size:28.8px;line-height:28.8px;left:3227.8px;transform:scaleX(1.056);transform-origin:0 50%;">Device Name</div>
<div class="t h" style="top:1345.9px;font-size:28.8px;line-height:28.8px;left:3591.2px;transform:scaleX(1.030);transform-origin:0 50%;">User Email</div>
<svg style="left:1907.5px;top:1420.5px" width="21" height="11"><polygon points="0,10.5 21,10.5 10.5,0" fill="#252423"/></svg>
<div class="b" style="left:444.0px;top:1447.1px;width:3518.6px;height:59.4px;background:#f2f2f2;"></div>
<div class="b" style="left:1897.8px;top:1447.1px;width:201.5px;height:58.5px;background:#fc7350;"></div>
<svg style="left:1658.6px;top:1463.0px" width="32" height="22" viewBox="0 0 32 22"><g fill="none" stroke="#2b2f80" stroke-width="1.9" stroke-linecap="round"><path d="M7.9,13.7 A5.95,5.95 0 0 1 7.9,1.8 L14.2,1.8 A5.95,5.95 0 0 1 14.2,13.7"/><path d="M17.4,7.9 A5.95,5.95 0 0 0 17.4,19.8 L24.2,19.8 A5.95,5.95 0 0 0 24.2,7.9"/></g></svg>
<div class="t" style="top:1463.7px;font-size:30px;line-height:30px;left:454.0px;transform:scaleX(1.012);transform-origin:0 50%;">'AmmyyAdmin' unwanted software was detected and was active</div>
<div class="t" style="top:1463.7px;font-size:30px;line-height:30px;left:1738.0px;transform:scaleX(0.991);transform-origin:0 50%;">New</div>
<div class="t" style="top:1463.7px;font-size:30px;line-height:30px;left:1907.5px;">Critical</div>
<div class="t" style="top:1463.7px;font-size:30px;line-height:30px;left:2427.8px;">10/21/2024 3:44:00 PM</div>
<div class="t" style="top:1463.7px;font-size:30px;line-height:30px;right:1166.0px;transform:scaleX(0.965);transform-origin:100% 50%;">91</div>
<div class="t" style="top:1463.7px;font-size:30px;line-height:30px;left:2951.3px;transform:scaleX(0.967);transform-origin:0 50%;">DefenseEvasion</div>
<div class="t" style="top:1463.7px;font-size:30px;line-height:30px;left:3227.8px;transform:scaleX(1.008);transform-origin:0 50%;">pc-0907.earthblock.com</div>
<div class="t" style="top:1463.7px;font-size:30px;line-height:30px;left:3591.2px;">mjackson@earthblock.co...</div>
<div class="b" style="left:1897.8px;top:1510.0px;width:201.5px;height:58.5px;background:#fc7350;"></div>
<svg style="left:1658.6px;top:1525.9px" width="32" height="22" viewBox="0 0 32 22"><g fill="none" stroke="#2b2f80" stroke-width="1.9" stroke-linecap="round"><path d="M7.9,13.7 A5.95,5.95 0 0 1 7.9,1.8 L14.2,1.8 A5.95,5.95 0 0 1 14.2,13.7"/><path d="M17.4,7.9 A5.95,5.95 0 0 0 17.4,19.8 L24.2,19.8 A5.95,5.95 0 0 0 24.2,7.9"/></g></svg>
<div class="t" style="top:1526.6px;font-size:30px;line-height:30px;left:454.0px;transform:scaleX(1.011);transform-origin:0 50%;">An active 'AmmyyAdmin' unwanted software process was detected while executing</div>
<div class="t" style="top:1526.6px;font-size:30px;line-height:30px;left:1738.0px;transform:scaleX(0.991);transform-origin:0 50%;">New</div>
<div class="t" style="top:1526.6px;font-size:30px;line-height:30px;left:1907.5px;">Critical</div>
<div class="t" style="top:1526.6px;font-size:30px;line-height:30px;left:2427.8px;">10/21/2024 3:43:00 PM</div>
<div class="t" style="top:1526.6px;font-size:30px;line-height:30px;right:1166.0px;transform:scaleX(0.965);transform-origin:100% 50%;">91</div>
<div class="t" style="top:1526.6px;font-size:30px;line-height:30px;left:2951.3px;transform:scaleX(1.008);transform-origin:0 50%;">UnwantedSoftware</div>
<div class="t" style="top:1526.6px;font-size:30px;line-height:30px;left:3227.8px;transform:scaleX(1.008);transform-origin:0 50%;">pc-0907.earthblock.com</div>
<div class="t" style="top:1526.6px;font-size:30px;line-height:30px;left:3591.2px;">mjackson@earthblock.co...</div>
<div class="b" style="left:444.0px;top:1573.0px;width:3518.6px;height:59.4px;background:#f2f2f2;"></div>
<div class="b" style="left:1897.8px;top:1573.0px;width:201.5px;height:58.5px;background:#fc7350;"></div>
<svg style="left:1658.6px;top:1588.9px" width="32" height="22" viewBox="0 0 32 22"><g fill="none" stroke="#2b2f80" stroke-width="1.9" stroke-linecap="round"><path d="M7.9,13.7 A5.95,5.95 0 0 1 7.9,1.8 L14.2,1.8 A5.95,5.95 0 0 1 14.2,13.7"/><path d="M17.4,7.9 A5.95,5.95 0 0 0 17.4,19.8 L24.2,19.8 A5.95,5.95 0 0 0 24.2,7.9"/></g></svg>
<div class="t" style="top:1589.6px;font-size:30px;line-height:30px;left:454.0px;transform:scaleX(1.015);transform-origin:0 50%;">An active 'AmmyyAdmin' unwanted software was detected</div>
<div class="t" style="top:1589.6px;font-size:30px;line-height:30px;left:1738.0px;transform:scaleX(0.991);transform-origin:0 50%;">New</div>
<div class="t" style="top:1589.6px;font-size:30px;line-height:30px;left:1907.5px;">Critical</div>
<div class="t" style="top:1589.6px;font-size:30px;line-height:30px;left:2427.8px;">10/21/2024 3:34:00 PM</div>
<div class="t" style="top:1589.6px;font-size:30px;line-height:30px;right:1166.0px;transform:scaleX(0.965);transform-origin:100% 50%;">91</div>
<div class="t" style="top:1589.6px;font-size:30px;line-height:30px;left:2951.3px;transform:scaleX(1.008);transform-origin:0 50%;">UnwantedSoftware</div>
<div class="t" style="top:1589.6px;font-size:30px;line-height:30px;left:3227.8px;transform:scaleX(1.008);transform-origin:0 50%;">pc-0907.earthblock.com</div>
<div class="t" style="top:1589.6px;font-size:30px;line-height:30px;left:3591.2px;">mjackson@earthblock.co...</div>
<div class="b" style="left:1897.8px;top:1635.9px;width:201.5px;height:58.5px;background:#fc7350;"></div>
<svg style="left:1658.6px;top:1651.8px" width="32" height="22" viewBox="0 0 32 22"><g fill="none" stroke="#2b2f80" stroke-width="1.9" stroke-linecap="round"><path d="M7.9,13.7 A5.95,5.95 0 0 1 7.9,1.8 L14.2,1.8 A5.95,5.95 0 0 1 14.2,13.7"/><path d="M17.4,7.9 A5.95,5.95 0 0 0 17.4,19.8 L24.2,19.8 A5.95,5.95 0 0 0 24.2,7.9"/></g></svg>
<div class="t" style="top:1652.5px;font-size:30px;line-height:30px;left:454.0px;transform:scaleX(1.007);transform-origin:0 50%;">An active 'OfferCore' unwanted software process was detected while executing</div>
<div class="t" style="top:1652.5px;font-size:30px;line-height:30px;left:1738.0px;transform:scaleX(0.991);transform-origin:0 50%;">New</div>
<div class="t" style="top:1652.5px;font-size:30px;line-height:30px;left:1907.5px;">Critical</div>
<div class="t" style="top:1652.5px;font-size:30px;line-height:30px;left:2427.8px;transform:scaleX(1.007);transform-origin:0 50%;">11/12/2024 8:22:00 PM</div>
<div class="t" style="top:1652.5px;font-size:30px;line-height:30px;right:1166.0px;transform:scaleX(0.965);transform-origin:100% 50%;">69</div>
<div class="t" style="top:1652.5px;font-size:30px;line-height:30px;left:2951.3px;transform:scaleX(1.008);transform-origin:0 50%;">UnwantedSoftware</div>
<div class="t" style="top:1652.5px;font-size:30px;line-height:30px;left:3227.8px;transform:scaleX(1.008);transform-origin:0 50%;">pc-0072.earthblock.com</div>
<div class="t" style="top:1652.5px;font-size:30px;line-height:30px;left:3591.2px;transform:scaleX(1.009);transform-origin:0 50%;">thead@earthblock.com</div>
<div class="b" style="left:444.0px;top:1698.8px;width:3518.6px;height:59.4px;background:#f2f2f2;"></div>
<div class="b" style="left:1897.8px;top:1698.8px;width:201.5px;height:58.5px;background:#fb8c00;"></div>
<svg style="left:1658.6px;top:1714.7px" width="32" height="22" viewBox="0 0 32 22"><g fill="none" stroke="#2b2f80" stroke-width="1.9" stroke-linecap="round"><path d="M7.9,13.7 A5.95,5.95 0 0 1 7.9,1.8 L14.2,1.8 A5.95,5.95 0 0 1 14.2,13.7"/><path d="M17.4,7.9 A5.95,5.95 0 0 0 17.4,19.8 L24.2,19.8 A5.95,5.95 0 0 0 24.2,7.9"/></g></svg>
<div class="t" style="top:1715.4px;font-size:30px;line-height:30px;left:454.0px;transform:scaleX(1.011);transform-origin:0 50%;">An active 'OfferCore' unwanted software was detected</div>
<div class="t" style="top:1715.4px;font-size:30px;line-height:30px;left:1738.0px;transform:scaleX(0.991);transform-origin:0 50%;">New</div>
<div class="t" style="top:1715.4px;font-size:30px;line-height:30px;left:1907.5px;transform:scaleX(1.065);transform-origin:0 50%;">High</div>
<div class="t" style="top:1715.4px;font-size:30px;line-height:30px;left:2427.8px;transform:scaleX(1.007);transform-origin:0 50%;">11/12/2024 8:13:00 PM</div>
<div class="t" style="top:1715.4px;font-size:30px;line-height:30px;right:1166.0px;transform:scaleX(0.965);transform-origin:100% 50%;">69</div>
<div class="t" style="top:1715.4px;font-size:30px;line-height:30px;left:2951.3px;transform:scaleX(1.008);transform-origin:0 50%;">UnwantedSoftware</div>
<div class="t" style="top:1715.4px;font-size:30px;line-height:30px;left:3227.8px;transform:scaleX(1.008);transform-origin:0 50%;">pc-0072.earthblock.com</div>
<div class="t" style="top:1715.4px;font-size:30px;line-height:30px;left:3591.2px;transform:scaleX(1.009);transform-origin:0 50%;">thead@earthblock.com</div>
<div class="b" style="left:1897.8px;top:1761.8px;width:201.5px;height:58.5px;background:#fb8c00;"></div>
<svg style="left:1658.6px;top:1777.7px" width="32" height="22" viewBox="0 0 32 22"><g fill="none" stroke="#2b2f80" stroke-width="1.9" stroke-linecap="round"><path d="M7.9,13.7 A5.95,5.95 0 0 1 7.9,1.8 L14.2,1.8 A5.95,5.95 0 0 1 14.2,13.7"/><path d="M17.4,7.9 A5.95,5.95 0 0 0 17.4,19.8 L24.2,19.8 A5.95,5.95 0 0 0 24.2,7.9"/></g></svg>
<div class="t" style="top:1778.4px;font-size:30px;line-height:30px;left:454.0px;">An active 'uTorrent_BundleInstaller' unwanted software process was detected while e...</div>
<div class="t" style="top:1778.4px;font-size:30px;line-height:30px;left:1738.0px;transform:scaleX(0.991);transform-origin:0 50%;">New</div>
<div class="t" style="top:1778.4px;font-size:30px;line-height:30px;left:1907.5px;transform:scaleX(1.065);transform-origin:0 50%;">High</div>
<div class="t" style="top:1778.4px;font-size:30px;line-height:30px;left:2427.8px;">9/19/2024 3:52:00 PM</div>
<div class="t" style="top:1778.4px;font-size:30px;line-height:30px;right:1166.0px;transform:scaleX(0.937);transform-origin:100% 50%;">123</div>
<div class="t" style="top:1778.4px;font-size:30px;line-height:30px;left:2951.3px;transform:scaleX(1.008);transform-origin:0 50%;">UnwantedSoftware</div>
<div class="t" style="top:1778.4px;font-size:30px;line-height:30px;left:3227.8px;transform:scaleX(1.008);transform-origin:0 50%;">pc-0062.earthblock.com</div>
<div class="t" style="top:1778.4px;font-size:30px;line-height:30px;left:3591.2px;transform:scaleX(1.009);transform-origin:0 50%;">knew@earthblock.com</div>
<div class="b" style="left:444.0px;top:1824.7px;width:3518.6px;height:59.4px;background:#f2f2f2;"></div>
<div class="b" style="left:1897.8px;top:1824.7px;width:201.5px;height:58.5px;background:#fb8c00;"></div>
<svg style="left:1658.6px;top:1840.6px" width="32" height="22" viewBox="0 0 32 22"><g fill="none" stroke="#2b2f80" stroke-width="1.9" stroke-linecap="round"><path d="M7.9,13.7 A5.95,5.95 0 0 1 7.9,1.8 L14.2,1.8 A5.95,5.95 0 0 1 14.2,13.7"/><path d="M17.4,7.9 A5.95,5.95 0 0 0 17.4,19.8 L24.2,19.8 A5.95,5.95 0 0 0 24.2,7.9"/></g></svg>
<div class="t" style="top:1841.3px;font-size:30px;line-height:30px;left:454.0px;transform:scaleX(1.006);transform-origin:0 50%;">An active 'uTorrent_BundleInstaller' unwanted software was detected</div>
<div class="t" style="top:1841.3px;font-size:30px;line-height:30px;left:1738.0px;transform:scaleX(0.991);transform-origin:0 50%;">New</div>
<div class="t" style="top:1841.3px;font-size:30px;line-height:30px;left:1907.5px;transform:scaleX(1.065);transform-origin:0 50%;">High</div>
<div class="t" style="top:1841.3px;font-size:30px;line-height:30px;left:2427.8px;">9/19/2024 3:43:00 PM</div>
<div class="t" style="top:1841.3px;font-size:30px;line-height:30px;right:1166.0px;transform:scaleX(0.937);transform-origin:100% 50%;">123</div>
<div class="t" style="top:1841.3px;font-size:30px;line-height:30px;left:2951.3px;transform:scaleX(1.008);transform-origin:0 50%;">UnwantedSoftware</div>
<div class="t" style="top:1841.3px;font-size:30px;line-height:30px;left:3227.8px;transform:scaleX(1.008);transform-origin:0 50%;">pc-0062.earthblock.com</div>
<div class="t" style="top:1841.3px;font-size:30px;line-height:30px;left:3591.2px;transform:scaleX(1.009);transform-origin:0 50%;">knew@earthblock.com</div>
<div class="b" style="left:1897.8px;top:1887.6px;width:201.5px;height:58.5px;background:#ffb300;"></div>
<svg style="left:1658.6px;top:1903.5px" width="32" height="22" viewBox="0 0 32 22"><g fill="none" stroke="#2b2f80" stroke-width="1.9" stroke-linecap="round"><path d="M7.9,13.7 A5.95,5.95 0 0 1 7.9,1.8 L14.2,1.8 A5.95,5.95 0 0 1 14.2,13.7"/><path d="M17.4,7.9 A5.95,5.95 0 0 0 17.4,19.8 L24.2,19.8 A5.95,5.95 0 0 0 24.2,7.9"/></g></svg>
<div class="t" style="top:1904.2px;font-size:30px;line-height:30px;left:454.0px;transform:scaleX(1.015);transform-origin:0 50%;">'AutoKms' hacktool was prevented</div>
<div class="t" style="top:1904.2px;font-size:30px;line-height:30px;left:1738.0px;transform:scaleX(0.991);transform-origin:0 50%;">New</div>
<div class="t" style="top:1904.2px;font-size:30px;line-height:30px;left:1907.5px;transform:scaleX(1.055);transform-origin:0 50%;">Medium</div>
<div class="t" style="top:1904.2px;font-size:30px;line-height:30px;left:2427.8px;">9/30/2024 12:53:00 PM</div>
<div class="t" style="top:1904.2px;font-size:30px;line-height:30px;right:1166.0px;transform:scaleX(0.984);transform-origin:100% 50%;">112</div>
<div class="t" style="top:1904.2px;font-size:30px;line-height:30px;left:2951.3px;transform:scaleX(0.983);transform-origin:0 50%;">Malware</div>
<div class="t" style="top:1904.2px;font-size:30px;line-height:30px;left:3227.8px;transform:scaleX(1.009);transform-origin:0 50%;">pc-0112.earthblock.com</div>
<div class="t" style="top:1904.2px;font-size:30px;line-height:30px;left:3591.2px;">ablis@earthblock.com</div>
<div class="b" style="left:444.0px;top:1950.5px;width:3518.6px;height:59.4px;background:#f2f2f2;"></div>
<div class="b" style="left:1897.8px;top:1950.5px;width:201.5px;height:58.5px;background:#ffb300;"></div>
<svg style="left:1658.6px;top:1966.4px" width="32" height="22" viewBox="0 0 32 22"><g fill="none" stroke="#2b2f80" stroke-width="1.9" stroke-linecap="round"><path d="M7.9,13.7 A5.95,5.95 0 0 1 7.9,1.8 L14.2,1.8 A5.95,5.95 0 0 1 14.2,13.7"/><path d="M17.4,7.9 A5.95,5.95 0 0 0 17.4,19.8 L24.2,19.8 A5.95,5.95 0 0 0 24.2,7.9"/></g></svg>
<div class="t" style="top:1967.1px;font-size:30px;line-height:30px;left:454.0px;">'DriverPack' unwanted software was prevented</div>
<div class="t" style="top:1967.1px;font-size:30px;line-height:30px;left:1738.0px;transform:scaleX(0.991);transform-origin:0 50%;">New</div>
<div class="t" style="top:1967.1px;font-size:30px;line-height:30px;left:1907.5px;transform:scaleX(1.055);transform-origin:0 50%;">Medium</div>
<div class="t" style="top:1967.1px;font-size:30px;line-height:30px;left:2427.8px;">12/3/2024 6:57:00 PM</div>
<div class="t" style="top:1967.1px;font-size:30px;line-height:30px;right:1166.0px;transform:scaleX(0.965);transform-origin:100% 50%;">48</div>
<div class="t" style="top:1967.1px;font-size:30px;line-height:30px;left:2951.3px;transform:scaleX(0.967);transform-origin:0 50%;">DefenseEvasion</div>
<div class="t" style="top:1967.1px;font-size:30px;line-height:30px;left:3227.8px;transform:scaleX(1.008);transform-origin:0 50%;">pc-0139.earthblock.com</div>
<div class="t" style="top:1967.1px;font-size:30px;line-height:30px;left:3591.2px;transform:scaleX(1.006);transform-origin:0 50%;">zball@earthblock.com</div>
<div class="b" style="left:4002.5px;top:1329.4px;width:13.5px;height:318.6px;background:#b1b1b1;border-radius:7px;"></div>
<div class="b" style="left:2592.8px;top:206.0px;width:706.8px;height:570.0px;background:#fff;border-radius:15px;"></div>
<div class="t h" style="top:214.5px;font-size:28.3px;line-height:28.3px;left:1953.7px;width:2000px;text-align:center;transform:scaleX(1.087);transform-origin:50% 50%;">Incidents by Severity</div>
<svg style="left:0;top:0" width="4096" height="2092"><path d="M2951.60,351.90 A175.5,175.5 0 0 1 3022.98,367.07 L2994.43,431.20 A105.3,105.3 0 0 0 2951.60,422.10 Z" fill="#fc7350"/><path d="M3022.98,367.07 A175.5,175.5 0 0 1 3118.51,473.17 L3051.75,494.86 A105.3,105.3 0 0 0 2994.43,431.20 Z" fill="#fb8c00"/><path d="M3118.51,473.17 A175.5,175.5 0 0 1 3126.14,545.74 L3056.32,538.41 A105.3,105.3 0 0 0 3051.75,494.86 Z" fill="#ffb300"/><path d="M3126.14,545.74 A175.5,175.5 0 0 1 2799.61,615.15 L2860.41,580.05 A105.3,105.3 0 0 0 3056.32,538.41 Z" fill="#ffeb3b"/><path d="M2799.61,615.15 A175.5,175.5 0 0 1 2951.60,351.90 L2951.60,422.10 A105.3,105.3 0 0 0 2860.41,580.05 Z" fill="#eaf3f9"/><polyline points="2989.0,352.0 2992.7,335.0 3015.5,335.0" fill="none" stroke="#a8a8a8" stroke-width="1.6"/><polyline points="2830.0,356.4 2852.0,356.4 2861.8,372.4" fill="none" stroke="#a8a8a8" stroke-width="1.6"/><polyline points="3106.7,437.6 3122.6,428.5 3145.4,428.5" fill="none" stroke="#a8a8a8" stroke-width="1.6"/><polyline points="3129.5,508.3 3147.0,507.0 3170.5,507.0" fill="none" stroke="#a8a8a8" stroke-width="1.6"/><polyline points="2989.0,704.4 2992.7,720.3 3015.5,720.3" fill="none" stroke="#a8a8a8" stroke-width="1.6"/></svg>
<div class="t" style="top:304.3px;font-size:27.6px;line-height:27.6px;left:3023.0px;color:#3b3a39;transform:scaleX(0.995);transform-origin:0 50%;">Critical</div>
<div class="t" style="top:342.2px;font-size:27.6px;line-height:27.6px;left:3023.0px;color:#3b3a39;transform:scaleX(0.953);transform-origin:0 50%;">1 (6.67%)</div>
<div class="t" style="top:327.1px;font-size:27.6px;line-height:27.6px;right:1275.2px;color:#3b3a39;transform:scaleX(1.039);transform-origin:100% 50%;">Informational</div>
<div class="t" style="top:365.0px;font-size:27.6px;line-height:27.6px;right:1275.2px;color:#3b3a39;transform:scaleX(0.926);transform-origin:100% 50%;">5 (33.3...)</div>
<div class="t" style="top:399.2px;font-size:27.6px;line-height:27.6px;left:3153.6px;color:#3b3a39;transform:scaleX(1.045);transform-origin:0 50%;">High</div>
<div class="t" style="top:437.0px;font-size:27.6px;line-height:27.6px;left:3153.6px;color:#3b3a39;transform:scaleX(0.926);transform-origin:0 50%;">2 (1...)</div>
<div class="t" style="top:476.6px;font-size:27.6px;line-height:27.6px;left:3178.7px;color:#3b3a39;transform:scaleX(1.051);transform-origin:0 50%;">Medium</div>
<div class="t" style="top:514.6px;font-size:27.6px;line-height:27.6px;left:3178.7px;color:#3b3a39;transform:scaleX(0.926);transform-origin:0 50%;">1 (...)</div>
<div class="t" style="top:709.2px;font-size:27.6px;line-height:27.6px;left:3023.2px;color:#3b3a39;transform:scaleX(0.969);transform-origin:0 50%;">Low 6 (40%)</div>
<div class="b" style="left:3325.0px;top:206.0px;width:704.6px;height:570.0px;background:#fff;border-radius:15px;"></div>
<div class="t h" style="top:214.5px;font-size:28.3px;line-height:28.3px;left:2683.5px;width:2000px;text-align:center;transform:scaleX(1.079);transform-origin:50% 50%;">Alerts by Severity</div>
<svg style="left:0;top:0" width="4096" height="2092"><path d="M3681.60,351.90 A175.5,175.5 0 0 1 3851.73,484.32 L3783.68,501.55 A105.3,105.3 0 0 0 3681.60,422.10 Z" fill="#fc7350"/><path d="M3851.73,484.32 A175.5,175.5 0 0 1 3810.72,646.26 L3759.07,598.72 A105.3,105.3 0 0 0 3783.68,501.55 Z" fill="#fb8c00"/><path d="M3810.72,646.26 A175.5,175.5 0 0 1 3598.07,681.75 L3631.48,620.01 A105.3,105.3 0 0 0 3759.07,598.72 Z" fill="#ffb300"/><path d="M3598.07,681.75 A175.5,175.5 0 0 1 3534.68,431.41 L3593.45,469.81 A105.3,105.3 0 0 0 3631.48,620.01 Z" fill="#ffeb3b"/><path d="M3534.68,431.41 A175.5,175.5 0 0 1 3681.60,351.90 L3681.60,422.10 A105.3,105.3 0 0 0 3593.45,469.81 Z" fill="#eaf3f9"/><polyline points="3741.0,357.8 3746.4,341.4 3768.3,341.4" fill="none" stroke="#a8a8a8" stroke-width="1.6"/><polyline points="3611.0,336.8 3632.8,336.8 3638.3,354.2" fill="none" stroke="#a8a8a8" stroke-width="1.6"/><polyline points="3839.0,613.2 3855.8,621.0 3878.6,621.0" fill="none" stroke="#a8a8a8" stroke-width="1.6"/><polyline points="3503.8,648.3 3525.7,648.3 3540.3,638.2" fill="none" stroke="#a8a8a8" stroke-width="1.6"/><polyline points="3711.3,704.4 3715.0,721.2 3737.3,721.2" fill="none" stroke="#a8a8a8" stroke-width="1.6"/></svg>
<div class="t" style="top:311.1px;font-size:27.6px;line-height:27.6px;left:3776.0px;color:#3b3a39;transform:scaleX(0.995);transform-origin:0 50%;">Critical</div>
<div class="t" style="top:349.0px;font-size:27.6px;line-height:27.6px;left:3776.0px;color:#3b3a39;transform:scaleX(0.942);transform-origin:0 50%;">4 (21.05%)</div>
<div class="t" style="top:305.6px;font-size:27.6px;line-height:27.6px;right:494.2px;color:#3b3a39;transform:scaleX(1.039);transform-origin:100% 50%;">Informational</div>
<div class="t" style="top:344.4px;font-size:27.6px;line-height:27.6px;right:494.2px;color:#3b3a39;transform:scaleX(0.946);transform-origin:100% 50%;">3 (15.79%)</div>
<div class="t" style="top:590.6px;font-size:27.6px;line-height:27.6px;left:3886.8px;color:#3b3a39;transform:scaleX(1.045);transform-origin:0 50%;">High</div>
<div class="t" style="top:629.4px;font-size:27.6px;line-height:27.6px;left:3886.8px;color:#3b3a39;transform:scaleX(0.926);transform-origin:0 50%;">3 (1...)</div>
<div class="t" style="top:618.9px;font-size:27.6px;line-height:27.6px;right:601.3px;color:#3b3a39;transform:scaleX(0.941);transform-origin:100% 50%;">Low</div>
<div class="t" style="top:656.8px;font-size:27.6px;line-height:27.6px;right:601.3px;color:#3b3a39;transform:scaleX(0.930);transform-origin:100% 50%;">5 (26...)</div>
<div class="t" style="top:691.9px;font-size:27.6px;line-height:27.6px;left:3745.5px;color:#3b3a39;transform:scaleX(1.051);transform-origin:0 50%;">Medium</div>
<div class="t" style="top:729.8px;font-size:27.6px;line-height:27.6px;left:3745.5px;color:#3b3a39;transform:scaleX(0.942);transform-origin:0 50%;">4 (21.05%)</div>
<div class="b" style="left:2592.6px;top:797.2px;width:1437.4px;height:428.1px;background:#fff;border-radius:15px;"></div>
<div class="t h" style="top:807.4px;font-size:28.3px;line-height:28.3px;left:2318.5px;width:2000px;text-align:center;transform:scaleX(1.075);transform-origin:50% 50%;">Alerts Trend by Create Date</div>
<div class="t" style="top:998.4px;font-size:21px;line-height:21px;left:1620.8px;width:2000px;text-align:center;color:#666;">5</div>
<div class="t" style="top:1119.0px;font-size:21px;line-height:21px;left:1620.8px;width:2000px;text-align:center;color:#666;">0</div>
<div class="b" style="left:2728.8px;top:1105.0px;width:162.0px;height:24.3px;background:#cccccc;"></div>
<div class="t" style="top:1069.8px;font-size:21.5px;line-height:21.5px;left:1809.8px;width:2000px;text-align:center;color:#333;">1</div>
<div class="t" style="top:1141.4px;font-size:22.3px;line-height:22.3px;left:1812.3px;width:2000px;text-align:center;color:#666;">August</div>
<div class="b" style="left:2936.8px;top:1032.2px;width:162.0px;height:97.1px;background:#cccccc;"></div>
<div class="t" style="top:997.0px;font-size:21.5px;line-height:21.5px;left:2017.8px;width:2000px;text-align:center;color:#333;">4</div>
<div class="t" style="top:1141.4px;font-size:22.3px;line-height:22.3px;left:2020.3px;width:2000px;text-align:center;color:#666;">September</div>
<div class="b" style="left:3144.8px;top:935.1px;width:162.0px;height:194.2px;background:#cccccc;"></div>
<div class="t" style="top:899.9px;font-size:21.5px;line-height:21.5px;left:2225.8px;width:2000px;text-align:center;color:#333;">8</div>
<div class="t" style="top:1141.4px;font-size:22.3px;line-height:22.3px;left:2228.3px;width:2000px;text-align:center;color:#666;">October</div>
<div class="t" style="top:1174.4px;font-size:22.3px;line-height:22.3px;left:2228.3px;width:2000px;text-align:center;color:#666;">2024</div>
<div class="b" style="left:3352.8px;top:1080.7px;width:162.0px;height:48.6px;background:#cccccc;"></div>
<div class="t" style="top:1045.5px;font-size:21.5px;line-height:21.5px;left:2433.8px;width:2000px;text-align:center;color:#333;">2</div>
<div class="t" style="top:1141.4px;font-size:22.3px;line-height:22.3px;left:2436.3px;width:2000px;text-align:center;color:#666;">November</div>
<div class="b" style="left:3560.8px;top:1080.7px;width:162.0px;height:48.6px;background:#cccccc;"></div>
<div class="t" style="top:1045.5px;font-size:21.5px;line-height:21.5px;left:2641.8px;width:2000px;text-align:center;color:#333;">2</div>
<div class="t" style="top:1141.4px;font-size:22.3px;line-height:22.3px;left:2644.3px;width:2000px;text-align:center;color:#666;">December</div>
<div class="b" style="left:3768.4px;top:1080.7px;width:162.0px;height:48.6px;background:#cccccc;"></div>
<div class="t" style="top:1045.5px;font-size:21.5px;line-height:21.5px;left:2849.4px;width:2000px;text-align:center;color:#333;">2</div>
<div class="t" style="top:1141.4px;font-size:22.3px;line-height:22.3px;left:2851.9px;width:2000px;text-align:center;color:#666;">January</div>
<div class="t" style="top:1174.4px;font-size:22.3px;line-height:22.3px;left:2851.9px;width:2000px;text-align:center;color:#666;">2025</div>
</div></body></html>
